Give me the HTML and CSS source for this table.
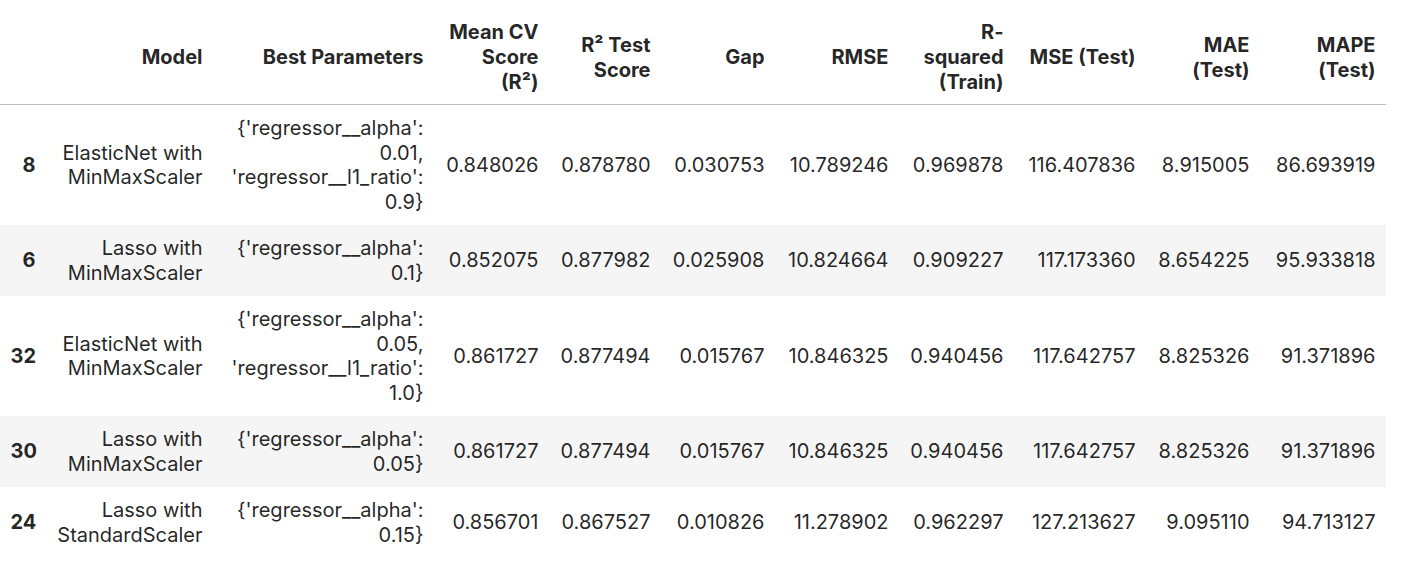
FILE: index.html
```html
<!DOCTYPE html>
<html>
<head>
<meta charset="utf-8">
<link rel="stylesheet" href="styles.css">
</head>
<body>
<table class="df">
  <colgroup>
    <col class="c-idx"><col class="c-model"><col class="c-params"><col class="c-cv"><col class="c-r2"><col class="c-gap"><col class="c-rmse"><col class="c-rtrain"><col class="c-mse"><col class="c-mae"><col class="c-mape">
  </colgroup>
  <thead>
    <tr>
      <th></th>
      <th>Model</th>
      <th>Best Parameters</th>
      <th>Mean CV Score (R²)</th>
      <th>R² Test Score</th>
      <th>Gap</th>
      <th>RMSE</th>
      <th>R-squared (Train)</th>
      <th>MSE (Test)</th>
      <th>MAE (Test)</th>
      <th>MAPE (Test)</th>
    </tr>
  </thead>
  <tbody>
    <tr>
      <th>8</th>
      <td>ElasticNet with MinMaxScaler</td>
      <td>{'regressor__alpha': 0.01, 'regressor__l1_ratio': 0.9}</td>
      <td>0.848026</td><td>0.878780</td><td>0.030753</td><td>10.789246</td><td>0.969878</td><td>116.407836</td><td>8.915005</td><td>86.693919</td>
    </tr>
    <tr>
      <th>6</th>
      <td>Lasso with MinMaxScaler</td>
      <td>{'regressor__alpha': 0.1}</td>
      <td>0.852075</td><td>0.877982</td><td>0.025908</td><td>10.824664</td><td>0.909227</td><td>117.173360</td><td>8.654225</td><td>95.933818</td>
    </tr>
    <tr>
      <th>32</th>
      <td>ElasticNet with MinMaxScaler</td>
      <td>{'regressor__alpha': 0.05, 'regressor__l1_ratio': 1.0}</td>
      <td>0.861727</td><td>0.877494</td><td>0.015767</td><td>10.846325</td><td>0.940456</td><td>117.642757</td><td>8.825326</td><td>91.371896</td>
    </tr>
    <tr>
      <th>30</th>
      <td>Lasso with MinMaxScaler</td>
      <td>{'regressor__alpha': 0.05}</td>
      <td>0.861727</td><td>0.877494</td><td>0.015767</td><td>10.846325</td><td>0.940456</td><td>117.642757</td><td>8.825326</td><td>91.371896</td>
    </tr>
    <tr>
      <th>24</th>
      <td>Lasso with StandardScaler</td>
      <td>{'regressor__alpha': 0.15}</td>
      <td>0.856701</td><td>0.867527</td><td>0.010826</td><td>11.278902</td><td>0.962297</td><td>127.213627</td><td>9.095110</td><td>94.713127</td>
    </tr>
  </tbody>
</table>
</body>
</html>
```

FILE: styles.css
```css
html, body {
  margin: 0;
  padding: 0;
  background: #ffffff;
}

.df {
  border-collapse: collapse;
  border-spacing: 0;
  table-layout: fixed;
  width: 1386px;
  font-family: Inter, "Noto Sans", "Liberation Sans", sans-serif;
  font-size: 20px;
  color: rgba(0, 0, 0, 0.87);
}

.c-idx { width: 46px; }
.c-model { width: 167px; }
.c-params { width: 221px; }
.c-cv { width: 115px; }
.c-r2 { width: 112px; }
.c-gap { width: 114px; }
.c-rmse { width: 124px; }
.c-rtrain { width: 115px; }
.c-mse { width: 132px; }
.c-mae { width: 114px; }
.c-mape { width: 126px; }

.df th,
.df td {
  text-align: right;
  vertical-align: middle;
  padding: 11px 10.5px;
  line-height: 24.5px;
  border: none;
}

.df thead th {
  font-weight: 700;
  line-height: 25px;
  padding-top: 20px;
  padding-bottom: 9px;
  border-bottom: 1px solid #bdbdbd;
}

.df tbody th {
  font-weight: 700;
}

.df td {
  font-weight: 400;
}

.df tbody tr:nth-child(even) {
  background: #f5f5f5;
}
```
